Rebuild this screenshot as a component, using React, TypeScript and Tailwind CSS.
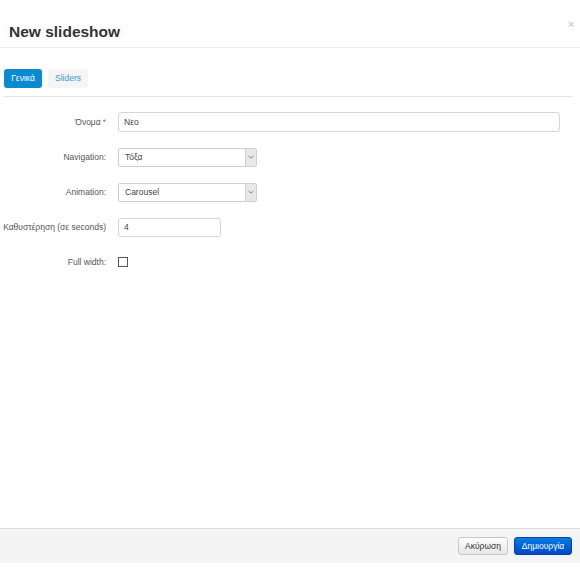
import { useState } from "react";

const labelCls = "w-[106px] shrink-0 text-right text-[8.5px] text-[#555]";

function Row({ label, required, children }: { label: string; required?: boolean; children: React.ReactNode }) {
  return (
    <div className="flex h-[20px] items-center">
      <label className={labelCls}>
        {label}
        {required && <span className="ml-[2px] text-[#d9534f]">*</span>}
      </label>
      <div className="ml-[12px] flex items-center">{children}</div>
    </div>
  );
}

function FakeSelect({ value }: { value: string }) {
  return (
    <div className="flex h-[19px] w-[139px] items-stretch rounded-[2px] border border-[#cfcfcf] bg-white">
      <span className="flex flex-1 items-center px-[6px] text-[8.5px] text-[#444]">{value}</span>
      <span className="flex w-[11px] items-center justify-center border-l border-[#cfcfcf] bg-[#e8e8e8]">
        <svg width="6" height="4" viewBox="0 0 6 4">
          <path d="M0.5 0.8 L3 3.2 L5.5 0.8" fill="none" stroke="#777" strokeWidth="0.9" />
        </svg>
      </span>
    </div>
  );
}

export default function App() {
  const [tab, setTab] = useState("general");
  const [name, setName] = useState("Νεο");
  const [delay, setDelay] = useState("4");
  const [full, setFull] = useState(false);

  return (
    <div className="flex h-[580px] w-[580px] flex-col bg-white font-['Liberation_Sans',Arial,sans-serif]">
      {/* HEADER */}
      <div className="relative flex h-[48px] shrink-0 items-start border-b border-[#efefef] px-[9px] pt-[20px]">
        <h1 className="text-[15.5px] font-bold leading-[24px] text-[#333]">New slideshow</h1>
        <button className="absolute right-[6px] top-[20px] text-[10px] font-bold leading-none text-[#ccc]">×</button>
      </div>

      {/* TABS */}
      <div className="ml-[4px] mr-[8px] flex gap-[6px] border-b border-[#e3e3e3] pb-[8px] pt-[21px]">
        <button
          onClick={() => setTab("general")}
          className={`h-[19px] w-[38px] rounded-[3px] text-[8.5px] ${
            tab === "general" ? "bg-[#0a8ad0] text-white" : "bg-[#f5f5f5] text-[#3a9ad9]"
          }`}
        >
          Γενικά
        </button>
        <button
          onClick={() => setTab("sliders")}
          className={`h-[19px] w-[40px] rounded-[3px] text-[8.5px] ${
            tab === "sliders" ? "bg-[#0a8ad0] text-white" : "bg-[#f5f5f5] text-[#3a9ad9]"
          }`}
        >
          Sliders
        </button>
      </div>

      {/* FORM */}
      <div className="flex flex-1 flex-col gap-[15px] pt-[15px]">
        <Row label="Όνομα" required>
          <input
            value={name}
            onChange={(e) => setName(e.target.value)}
            className="h-[20px] w-[442px] rounded-[3px] border border-[#d5d5d5] px-[5px] text-[8.5px] text-[#444] outline-none"
          />
        </Row>
        <Row label="Navigation:">
          <FakeSelect value="Τόξα" />
        </Row>
        <Row label="Animation:">
          <FakeSelect value="Carousel" />
        </Row>
        <Row label="Καθυστέρηση (σε seconds)">
          <input
            value={delay}
            onChange={(e) => setDelay(e.target.value)}
            className="h-[19px] w-[103px] rounded-[3px] border border-[#d5d5d5] px-[5px] text-[8.5px] text-[#444] outline-none"
          />
        </Row>
        <Row label="Full width:">
          <button
            onClick={() => setFull(!full)}
            className="flex h-[10px] w-[10px] items-center justify-center border border-[#555] bg-white text-[7px] leading-none"
          >
            {full ? "✓" : ""}
          </button>
        </Row>
      </div>

      {/* FOOTER */}
      <div className="flex h-[35px] shrink-0 items-center justify-end gap-[6px] border-t border-[#dcdcdc] bg-[#f4f4f4] pr-[8px]">
        <button className="h-[18px] w-[50px] rounded-[3px] border border-[#c8c8c8] bg-gradient-to-b from-white to-[#e6e6e6] text-[8.5px] text-[#333]">
          Ακύρωση
        </button>
        <button className="h-[18px] w-[58px] rounded-[3px] border border-[#0044aa] bg-gradient-to-b from-[#0a7ce0] to-[#0048cc] text-[8.5px] text-white">
          Δημιουργία
        </button>
      </div>
      <div className="h-[17px] shrink-0 bg-white" />
    </div>
  );
}
